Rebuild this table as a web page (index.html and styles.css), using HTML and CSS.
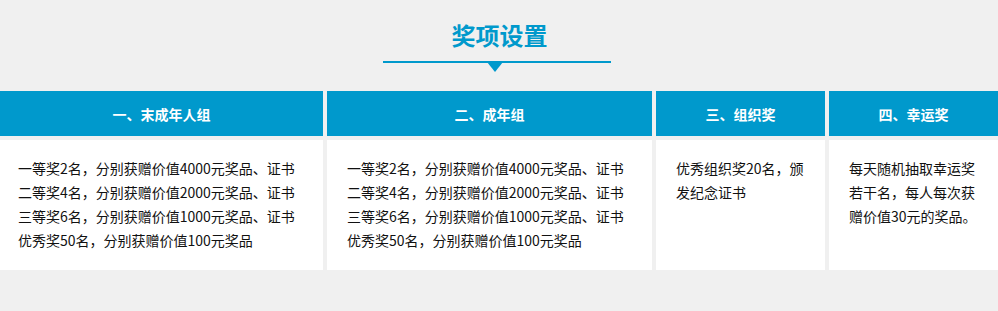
FILE: index.html
```html
<!DOCTYPE html>
<html lang="zh-CN">
<head>
<meta charset="utf-8">
<title>奖项设置</title>
<link rel="stylesheet" href="styles.css">
</head>
<body>
<div class="page">
  <div class="title-wrap">
    <h2 class="title">奖项设置</h2>
    <div class="title-line"><span class="arrow"></span></div>
  </div>
  <div class="awards">
    <div class="col col-1">
      <div class="col-head">一、末成年人组</div>
      <div class="col-body first">
        <p>一等奖2名，分别获赠价值4000元奖品、证书</p>
        <p>二等奖4名，分别获赠价值2000元奖品、证书</p>
        <p>三等奖6名，分别获赠价值1000元奖品、证书</p>
        <p>优秀奖50名，分别获赠价值100元奖品</p>
      </div>
    </div>
    <div class="col col-2">
      <div class="col-head">二、成年组</div>
      <div class="col-body">
        <p>一等奖2名，分别获赠价值4000元奖品、证书</p>
        <p>二等奖4名，分别获赠价值2000元奖品、证书</p>
        <p>三等奖6名，分别获赠价值1000元奖品、证书</p>
        <p>优秀奖50名，分别获赠价值100元奖品</p>
      </div>
    </div>
    <div class="col col-3">
      <div class="col-head">三、组织奖</div>
      <div class="col-body">
        <p>优秀组织奖20名，颁发纪念证书</p>
      </div>
    </div>
    <div class="col col-4">
      <div class="col-head">四、幸运奖</div>
      <div class="col-body">
        <p>每天随机抽取幸运奖若干名，每人每次获赠价值30元的奖品。</p>
      </div>
    </div>
  </div>
</div>
</body>
</html>
```

FILE: styles.css
```css
* { box-sizing: border-box; }
html, body {
  margin: 0;
  padding: 0;
  background: #f0f0f0;
}
body {
  font-family: "Noto Sans CJK SC", "Liberation Sans", sans-serif;
  color: #111;
  width: 998px;
}
.page {
  padding-top: 19px;
}
.title-wrap {
  display: flex;
  flex-direction: column;
  align-items: center;
}
.title {
  margin: 0;
  font-size: 24px;
  line-height: 32px;
  font-weight: bold;
  color: #0099cc;
  padding-left: 1px;
}
.title-line {
  position: relative;
  width: 228px;
  height: 2px;
  background: #0099cc;
  margin-top: 10px;
  margin-left: -4px;
}
.arrow {
  position: absolute;
  left: 104px;
  top: 1px;
  width: 0;
  height: 0;
  border-left: 8px solid transparent;
  border-right: 8px solid transparent;
  border-top: 10px solid #0099cc;
}
.awards {
  margin-top: 28px;
  display: grid;
  grid-template-columns: 323px 325px 169px 169px;
  column-gap: 4px;
}
.col {
  display: flex;
  flex-direction: column;
  gap: 4px;
}
.col-head {
  height: 45px;
  background: #0099cc;
  color: #fff;
  font-size: 14px;
  font-weight: bold;
  display: flex;
  align-items: center;
  justify-content: center;
}
.col-body {
  flex: 1;
  background: #fff;
  padding: 16px 20px 18px 20px;
  font-size: 14px;
  line-height: 24px;
}
.col-body.first {
  padding-left: 18px;
}
.col-body p {
  margin: 0;
}
```
